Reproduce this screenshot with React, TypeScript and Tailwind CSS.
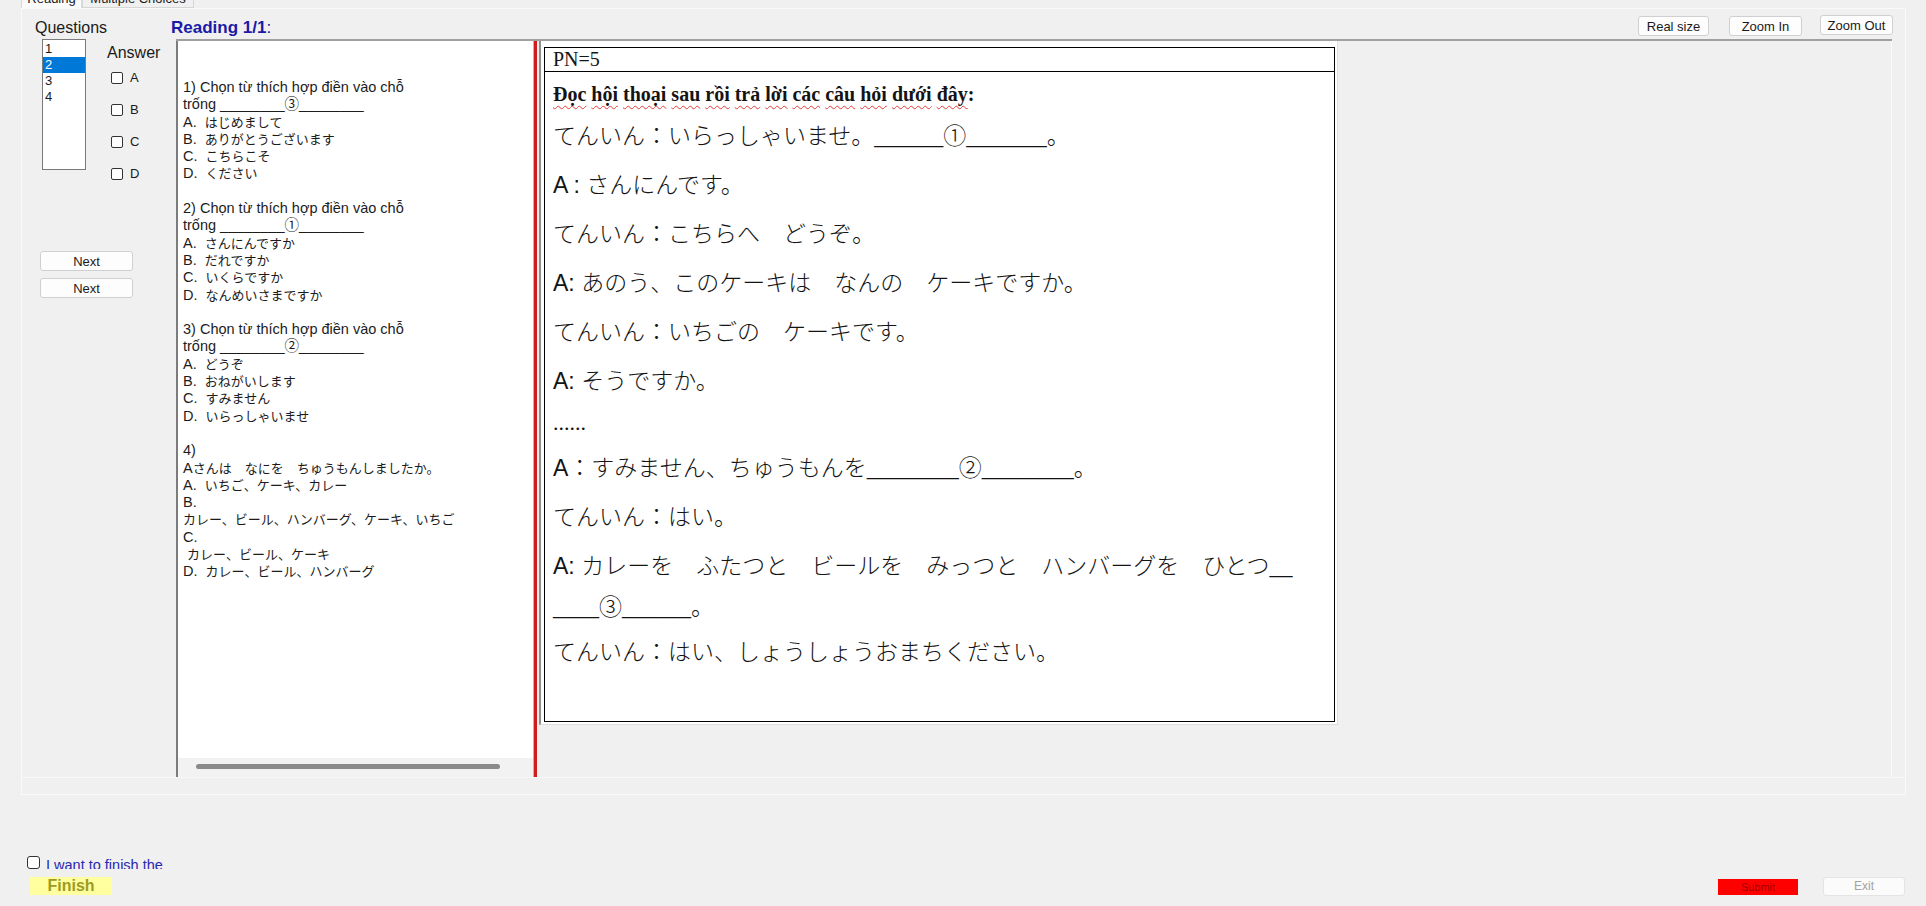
import React from "react";

const JP_RE = /([\u3000-\u30ff\u4e00-\u9fff\uff00-\uffef]+)/;

const qLines: string[] = [
  "1) Chọn từ thích hợp điền vào chỗ",
  "trống ________③________",
  "A.  はじめまして",
  "B.  ありがとうございます",
  "C.  こちらこそ",
  "D.  ください",
  "",
  "2) Chọn từ thích hợp điền vào chỗ",
  "trống ________①________",
  "A.  さんにんですか",
  "B.  だれですか",
  "C.  いくらですか",
  "D.  なんめいさまですか",
  "",
  "3) Chọn từ thích hợp điền vào chỗ",
  "trống ________②________",
  "A.  どうぞ",
  "B.  おねがいします",
  "C.  すみません",
  "D.  いらっしゃいませ",
  "",
  "4)",
  "Aさんは　なにを　ちゅうもんしましたか。",
  "A.  いちご、ケーキ、カレー",
  "B.",
  "カレー、ビール、ハンバーグ、ケーキ、いちご",
  "C.",
  " カレー、ビール、ケーキ",
  "D.  カレー、ビール、ハンバーグ",
];

function QLine({ text }: { text: string }) {
  const parts = text.split(JP_RE);
  return (
    <div className="h-[17.3px] leading-[17.3px] whitespace-pre">
      {parts.map((p, i) =>
        JP_RE.test(p) ? (
          <span key={i} className="text-[13px]">
            {p}
          </span>
        ) : (
          <React.Fragment key={i}>{p}</React.Fragment>
        )
      )}
    </div>
  );
}

function U({ n }: { n: number }) {
  return <span className="font-['Liberation_Serif',serif] leading-none">{"_".repeat(n)}</span>;
}

function A({ t }: { t: string }) {
  return <span className="font-['Liberation_Sans',sans-serif] leading-none whitespace-pre">{t}</span>;
}

function P({ children, last }: { children: React.ReactNode; last?: boolean }) {
  return (
    <div className={last ? "leading-[41px] mb-[4px] whitespace-nowrap" : "leading-[41px] mb-[8px] whitespace-nowrap"}>
      {children}
    </div>
  );
}

function Wavy({ children }: { children: React.ReactNode }) {
  return (
    <span className="underline decoration-wavy decoration-[#e23b3b] decoration-1 underline-offset-[4px]">
      {children}
    </span>
  );
}

function Checkbox({ label }: { label: string }) {
  return (
    <div className="flex items-center h-[12px] gap-[7px]">
      <div className="w-[12px] h-[12px] border border-[#333333] rounded-[2px] bg-white shrink-0" />
      <span className="text-[13px] leading-[14px]">{label}</span>
    </div>
  );
}

function WinButton({ label, className }: { label: string; className: string }) {
  return (
    <div
      className={
        "h-[20px] bg-[#fdfdfd] border border-[#d0d0d0] rounded-[3px] flex items-center justify-center text-[13px] leading-[15px] text-[#1a1a1a] shrink-0 " +
        className
      }
    >
      {label}
    </div>
  );
}

export default function App() {
  const headingWords = ["Đọc", "hội", "thoại", "sau", "rồi", "trả", "lời", "các", "câu", "hỏi", "dưới", "đây"];
  return (
    <div className="w-[1926px] h-[906px] bg-[#f0f0f0] overflow-hidden flex flex-col font-['Liberation_Sans','Noto_Sans_CJK_JP',sans-serif] text-[#1a1a1a]">
      {/* tab strip (mostly scrolled out of view) */}
      <div className="h-[8px] shrink-0 overflow-hidden flex items-end pl-[21px] text-[13px]">
        <div className="h-[20px] w-[61px] shrink-0 bg-[#fbfbfb] border-x border-t border-[#dadada] flex items-center justify-center">
          Reading
        </div>
        <div className="h-[18px] w-[112px] shrink-0 bg-[#f0f0f0] border border-[#d6d6d6] flex items-center justify-center">
          Multiple Choices
        </div>
      </div>

      {/* tab page */}
      <div className="ml-[21px] w-[1885px] h-[787px] shrink-0 border border-[#fafafa] flex flex-col">
        {/* header row */}
        <div className="h-[30px] shrink-0 flex items-start">
          <div className="w-[149px] shrink-0 pl-[13px] pt-[10px] text-[16px] leading-[18px]">Questions</div>
          <div className="pt-[10px] text-[17px] leading-[18px] text-[#1a1aa6]">
            <span className="font-bold">Reading 1/1</span>:
          </div>
          <div className="flex-1" />
          <div className="flex items-start pr-[12px]">
            <WinButton label="Real size" className="w-[71px] mt-[7px]" />
            <WinButton label="Zoom In" className="w-[73px] mt-[7px] ml-[20px]" />
            <WinButton label="Zoom Out" className="w-[73px] mt-[6px] ml-[18px]" />
          </div>
        </div>

        {/* main row */}
        <div className="h-[739px] shrink-0 flex border-b border-[#f8f8f8]">
          {/* left column */}
          <div className="w-[154px] shrink-0 flex flex-col">
            <div className="h-[212px] flex items-start">
              <div className="ml-[20px] w-[44px] h-[131px] border border-[#7a7a7a] bg-white pt-[1px] text-[13px]">
                <div className="h-[16px] leading-[16px] pl-[2px]">1</div>
                <div className="h-[16px] leading-[16px] pl-[2px] bg-[#0078d7] text-white">2</div>
                <div className="h-[16px] leading-[16px] pl-[2px]">3</div>
                <div className="h-[16px] leading-[16px] pl-[2px]">4</div>
              </div>
              <div className="ml-[21px] pt-[5px] flex flex-col">
                <div className="text-[16px] leading-[18px]">Answer</div>
                <div className="mt-[10px] ml-[4px] flex flex-col gap-[20px]">
                  <Checkbox label="A" />
                  <Checkbox label="B" />
                  <Checkbox label="C" />
                  <Checkbox label="D" />
                </div>
              </div>
            </div>
            <WinButton label="Next" className="ml-[18px] w-[93px]" />
            <WinButton label="Next" className="ml-[18px] w-[93px] mt-[7px]" />
          </div>

          {/* reading container */}
          <div className="w-[1716px] shrink-0 border-t-2 border-[#a0a0a0] flex">
            {/* question text panel */}
            <div className="w-[357px] shrink-0 bg-white border-l-2 border-[#7c7c7c] flex flex-col">
              <div className="flex-1 overflow-hidden pl-[5px] pt-[38px] text-[14.5px] text-[#1c1c1c]">
                {qLines.map((l, i) => (
                  <QLine key={i} text={l} />
                ))}
              </div>
              <div className="h-[19px] shrink-0 bg-[#f2f2f2] pt-[6px] pl-[18px]">
                <div className="w-[304px] h-[5px] rounded-full bg-[#8a8a8a]" />
              </div>
            </div>

            {/* splitter */}
            <div className="w-[4px] shrink-0 bg-[#d01c1c] border-l border-[#b8b8b8]" />

            {/* viewer */}
            <div className="flex-1 bg-[#f0f0f0] pl-[2px] border-r border-[#fafafa]">
              <div className="w-fit bg-white border-l-2 border-[#8f8f8f] border-r border-b border-r-[#dedede] border-b-[#dedede] pl-[3px] pt-[6px] pr-[2px] pb-[2px]">
                <div className="w-[791px] h-[675px] border border-black bg-white flex flex-col text-[#141414]">
                  <div className="h-[24px] shrink-0 border-b border-black px-[8px] font-['Liberation_Serif',serif] text-[20px] leading-[23px]">
                    PN=5
                  </div>
                  <div className="px-[8px] pt-[8px] font-['Noto_Sans_CJK_JP',sans-serif] text-[23px] font-light">
                    <div className="h-[28px] leading-[28px] font-['Liberation_Serif',serif] text-[20px] font-bold whitespace-nowrap">
                      {headingWords.map((w, i) => (
                        <React.Fragment key={i}>
                          <Wavy>{w}</Wavy>
                          {i < headingWords.length - 1 ? " " : ":"}
                        </React.Fragment>
                      ))}
                    </div>
                    <div className="mt-[6px]">
                      <P>
                        てんいん：いらっしゃいませ。
                        <U n={6} />①<U n={7} />。
                      </P>
                      <P>
                        <A t="A : " />さんにんです。
                      </P>
                      <P>てんいん：こちらへ　どうぞ。</P>
                      <P>
                        <A t="A: " />あのう、このケーキは　なんの　ケーキですか。
                      </P>
                      <P>てんいん：いちごの　ケーキです。</P>
                      <P>
                        <A t="A: " />そうですか。
                      </P>
                      <div className="leading-[30px] mb-[8px] font-['Liberation_Serif',serif] text-[22px] font-normal">
                        ......
                      </div>
                      <P>
                        <A t="A" />：すみません、ちゅうもんを
                        <U n={8} />②<U n={8} />。
                      </P>
                      <P>てんいん：はい。</P>
                      <P last>
                        <A t="A: " />カレーを　ふたつと　ビールを　みっつと　ハンバーグを　ひとつ
                        <U n={2} />
                        <br />
                        <U n={4} />③<U n={6} />。
                      </P>
                      <P>てんいん：はい、しょうしょうおまちください。</P>
                    </div>
                  </div>
                </div>
              </div>
            </div>
          </div>
        </div>
      </div>

      {/* bottom area */}
      <div className="flex-1 flex items-start">
        <div className="flex flex-col">
          <div className="mt-[61px] ml-[27px] flex items-start h-[13px]">
            <div className="w-[13px] h-[13px] border border-[#333333] rounded-[3px] bg-white shrink-0" />
            <div className="ml-[6px] mt-[1px] h-[12px] overflow-hidden">
              <div className="text-[14.5px] leading-[17px] text-[#2727b0] whitespace-nowrap">I want to finish the</div>
            </div>
          </div>
          <div className="mt-[8px] ml-[30px] w-[82px] h-[18px] bg-[#ffffa0] flex items-center justify-center text-[16px] leading-[18px] font-bold text-[#9c9c22]">
            Finish
          </div>
        </div>
        <div className="flex-1" />
        <div className="mt-[84px] w-[80px] h-[16px] bg-[#ff0000] flex items-center justify-center text-[11px] leading-[12px] text-[#a00000]">
          Submit
        </div>
        <div className="mt-[82px] ml-[25px] mr-[21px] w-[82px] h-[19px] bg-[#fbfbfb] border border-[#e4e4e4] rounded-[3px] flex items-center justify-center text-[12px] leading-[13px] text-[#a3a3a3]">
          Exit
        </div>
      </div>
    </div>
  );
}
